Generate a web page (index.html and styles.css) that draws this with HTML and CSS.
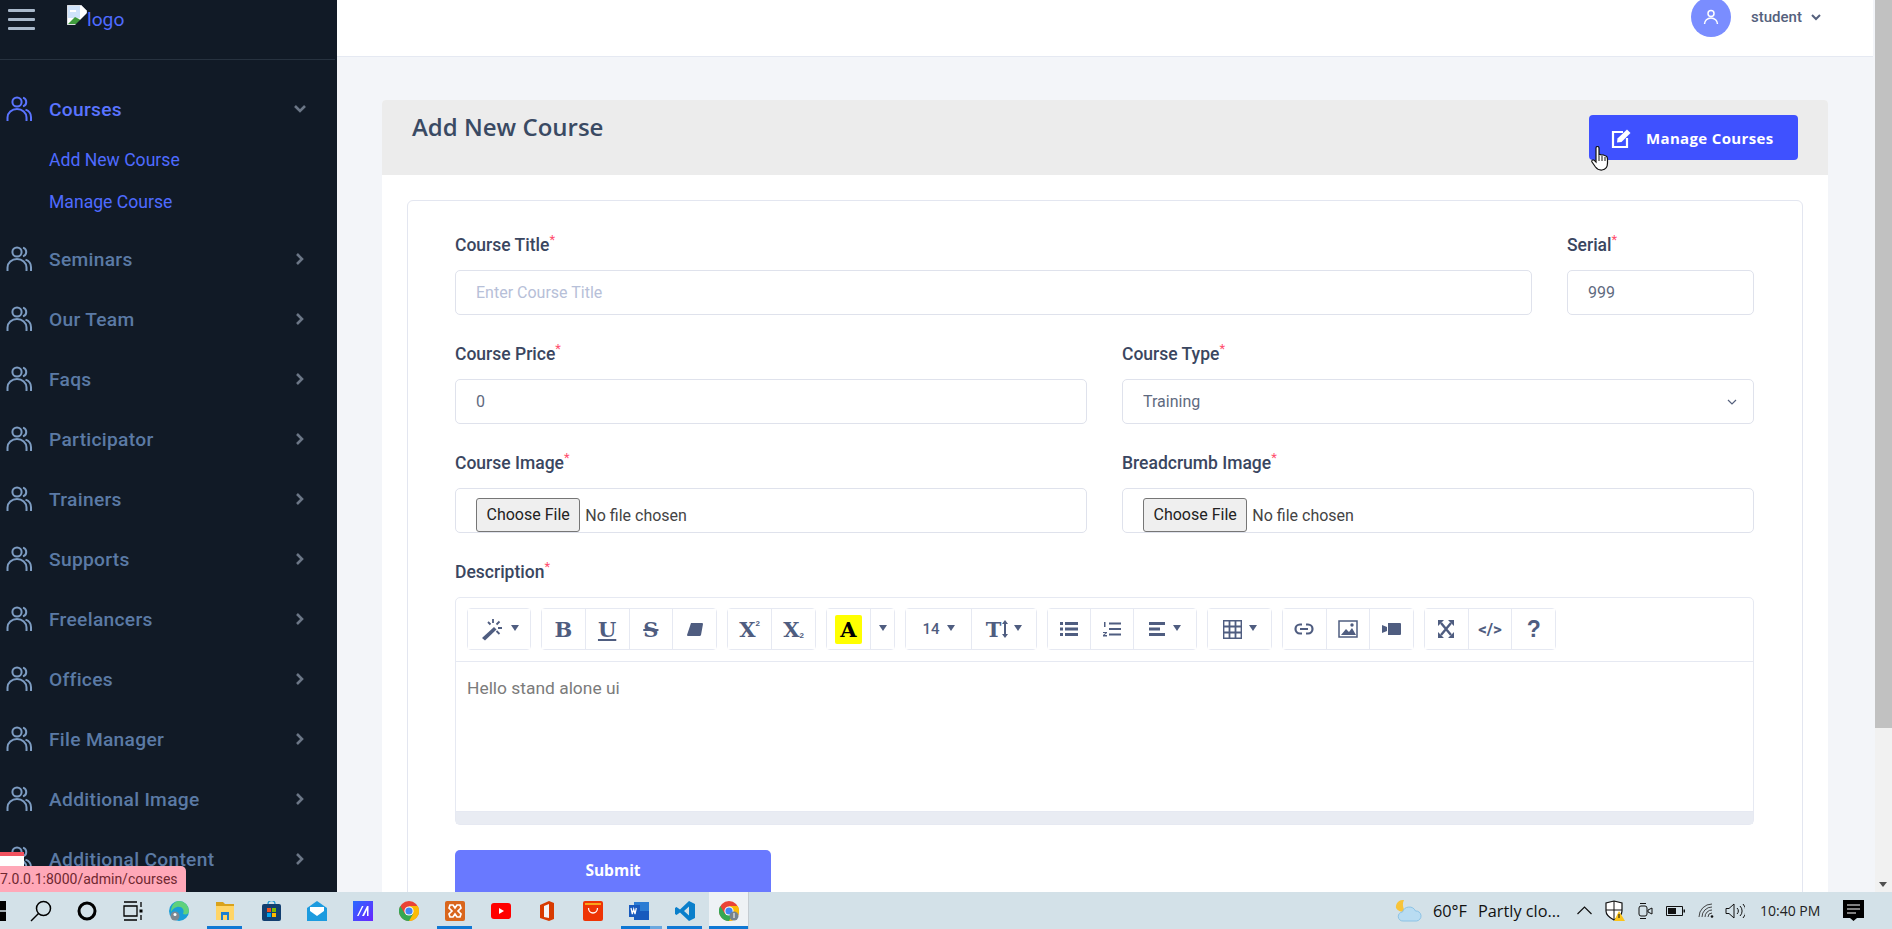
FILE: index.html
```html
<!DOCTYPE html>
<html lang="en">
<head>
<meta charset="utf-8">
<title>Add New Course</title>
<link rel="stylesheet" href="styles.css">
</head>
<body>
<svg class="defs" width="0" height="0">
  <defs>
    <symbol id="users" viewBox="0 0 26 26">
      <circle cx="11" cy="6" r="4.6" fill="none" stroke="currentColor" stroke-width="2"/>
      <path d="M1.5 25v-3.5a9.5 8.5 0 0 1 19 0V25M17 1.6a4.6 4.6 0 0 1 0 8.8M19.5 13.6a8 8 0 0 1 5.5 7.6V25" fill="none" stroke="currentColor" stroke-width="2"/>
    </symbol>
    <symbol id="chev-r" viewBox="0 0 12 14"><path d="M3 2l5 5-5 5" fill="none" stroke="currentColor" stroke-width="2.6"/></symbol>
  </defs>
</svg>
<div class="app">
  <aside class="sidebar">
    <div class="side-head">
      <div class="burger"><span></span><span></span><span></span></div>
      <a class="logo" href="#">
        <svg class="broken" width="20" height="20" viewBox="0 0 20 20"><path d="M0 0h14l6 6v14H0z" fill="#fff" stroke="#b9bec6" stroke-width="1"/><path d="M1 1h12v12H1z" fill="#cfe3fb"/><path d="M1 19l7-7 4 2 6 5z" fill="#3f9b3c"/><path d="M3 5h6v2H3z" fill="#fff"/><path d="M20 8L8 20h12z" fill="#111a26"/></svg>
        <span>logo</span>
      </a>
    </div>
    <nav class="menu">
      <div class="item active"><svg class="ico"><use href="#users"/></svg><span class="name">Courses</span><svg class="chev-d" width="14" height="10" viewBox="0 0 14 10"><path d="M2 2l5 5 5-5" fill="none" stroke="currentColor" stroke-width="2.6"/></svg></div>
      <div class="sub"><a href="#">Add New Course</a><a href="#">Manage Course</a></div>
      <div class="item"><svg class="ico"><use href="#users"/></svg><span class="name">Seminars</span><svg class="chev"><use href="#chev-r"/></svg></div>
      <div class="item"><svg class="ico"><use href="#users"/></svg><span class="name">Our Team</span><svg class="chev"><use href="#chev-r"/></svg></div>
      <div class="item"><svg class="ico"><use href="#users"/></svg><span class="name">Faqs</span><svg class="chev"><use href="#chev-r"/></svg></div>
      <div class="item"><svg class="ico"><use href="#users"/></svg><span class="name">Participator</span><svg class="chev"><use href="#chev-r"/></svg></div>
      <div class="item"><svg class="ico"><use href="#users"/></svg><span class="name">Trainers</span><svg class="chev"><use href="#chev-r"/></svg></div>
      <div class="item"><svg class="ico"><use href="#users"/></svg><span class="name">Supports</span><svg class="chev"><use href="#chev-r"/></svg></div>
      <div class="item"><svg class="ico"><use href="#users"/></svg><span class="name">Freelancers</span><svg class="chev"><use href="#chev-r"/></svg></div>
      <div class="item"><svg class="ico"><use href="#users"/></svg><span class="name">Offices</span><svg class="chev"><use href="#chev-r"/></svg></div>
      <div class="item"><svg class="ico"><use href="#users"/></svg><span class="name">File Manager</span><svg class="chev"><use href="#chev-r"/></svg></div>
      <div class="item"><svg class="ico"><use href="#users"/></svg><span class="name">Additional Image</span><svg class="chev"><use href="#chev-r"/></svg></div>
      <div class="item"><svg class="ico"><use href="#users"/></svg><span class="name">Additional Content</span><svg class="chev"><use href="#chev-r"/></svg></div>
    </nav>
  </aside>

  <main class="main">
    <header class="topbar">
      <div class="avatar"><svg width="16" height="16" viewBox="0 0 16 16"><circle cx="8" cy="4.5" r="3" fill="none" stroke="#fff" stroke-width="1.5"/><path d="M1.5 15a6.5 6 0 0 1 13 0" fill="none" stroke="#fff" stroke-width="1.5"/></svg></div>
      <span class="uname">student</span>
      <svg class="uchev" width="10" height="7" viewBox="0 0 10 7"><path d="M1 1l4 4 4-4" fill="none" stroke="#55617d" stroke-width="2"/></svg>
    </header>
    <div class="content">
      <section class="panel">
        <div class="panel-head">
          <h1>Add New Course</h1>
          <a class="manage" href="#">
            <svg width="21" height="20" viewBox="0 0 21 20"><path d="M12 4H2v15h14V10" fill="none" stroke="#fff" stroke-width="2.2"/><path d="M6.500 10.500L16 1.500l3.500 3.500-9 9-4.500 .5z" fill="#fff"/></svg>
            <span>Manage Courses</span>
          </a>
        </div>
        <div class="panel-body">
          <form class="card">
            <div class="row">
              <div class="field grow"><label>Course Title<sup>*</sup></label><input class="ctl" type="text" placeholder="Enter Course Title"></div>
              <div class="field serial"><label>Serial<sup>*</sup></label><input class="ctl" type="text" value="999"></div>
            </div>
            <div class="row">
              <div class="field half"><label>Course Price<sup>*</sup></label><input class="ctl" type="text" value="0"></div>
              <div class="field half"><label>Course Type<sup>*</sup></label>
                <div class="selwrap"><select class="ctl"><option>Training</option></select><svg class="selchev" width="10" height="6" viewBox="0 0 10 6"><path d="M1 1l4 4 4-4" fill="none" stroke="#55617d" stroke-width="1.2"/></svg></div>
              </div>
            </div>
            <div class="row">
              <div class="field half"><label>Course Image<sup>*</sup></label><div class="filebox"><input type="file"></div></div>
              <div class="field half"><label>Breadcrumb Image<sup>*</sup></label><div class="filebox"><input type="file"></div></div>
            </div>
            <div class="field"><label>Description<sup>*</sup></label>
              <div class="editor">
                <div class="toolbar">
                  <div class="grp g1"><button type="button" class="b"><svg width="24" height="24" viewBox="0 0 24 24"><path d="M2 21L14 10l2.500 2.500L5 23.500z" fill="currentColor"/><path d="M13 2v4M22 11h-4M19.500 4.500l-3 3M8 5l2.500 2.500M19.500 17l-3-3" stroke="currentColor" stroke-width="1.8"/></svg><i class="caret"></i></button></div>
                  <div class="grp g2"><button type="button" class="b serif">B</button><button type="button" class="b serif und">U</button><button type="button" class="b serif strike">S</button><button type="button" class="b"><svg width="17" height="15" viewBox="0 0 17 15"><path d="M5 1h11a1 1 0 0 1 1 1l-2 11a1.500 1.500 0 0 1-1.500 1H2a1 1 0 0 1-1-1z" fill="currentColor"/></svg></button></div>
                  <div class="grp g3"><button type="button" class="b serif">X<small class="sp">2</small></button><button type="button" class="b serif">X<small class="sb">2</small></button></div>
                  <div class="grp g4"><button type="button" class="b b-a"><span class="hl serif">A</span></button><button type="button" class="b b-ac"><i class="caret"></i></button></div>
                  <div class="grp g5"><button type="button" class="b b-num">14<i class="caret"></i></button><button type="button" class="b serif b-t">T<svg width="8" height="20" viewBox="0 0 8 20"><path d="M4 1l3 4H5v10h2l-3 4-3-4h2V5H1z" fill="currentColor"/></svg><i class="caret"></i></button></div>
                  <div class="grp g6">
                    <button type="button" class="b b43"><svg width="18" height="16" viewBox="0 0 18 16"><path d="M0 1h3v3H0zM5 1h13v3H5zM0 6.500h3v3H0zM5 6.500h13v3H5zM0 12h3v3H0zM5 12h13v3H5z" fill="currentColor"/></svg></button>
                    <button type="button" class="b b43"><svg width="18" height="16" viewBox="0 0 18 16"><path d="M6 1.500h12v2H6zM6 7h12v2H6zM6 12.500h12v2H6zM1 1h1.500v5H1zM0 11h4v1L1.500 14H4v1.500H0V14l2.500-2H0z" fill="currentColor"/></svg></button>
                    <button type="button" class="b b62"><svg width="17" height="16" viewBox="0 0 17 16"><path d="M0 1h16v3H0zM0 6.500h11v3H0zM0 12h16v3H0z" fill="currentColor"/></svg><i class="caret"></i></button>
                  </div>
                  <div class="grp g7"><button type="button" class="b"><svg width="19" height="19" viewBox="0 0 19 19"><path d="M.5.500h18v18H.5zM6.500.500v18M12.500.500v18M.5 6.500h18M.5 12.500h18" fill="none" stroke="currentColor" stroke-width="1.8"/></svg><i class="caret"></i></button></div>
                  <div class="grp g8">
                    <button type="button" class="b"><svg width="20" height="12" viewBox="0 0 20 12"><path d="M8 1.500H6a4.500 4.500 0 0 0 0 9h2M12 1.500h2a4.500 4.500 0 0 1 0 9h-2M6 6h8" fill="none" stroke="currentColor" stroke-width="2.2"/></svg></button>
                    <button type="button" class="b"><svg width="20" height="18" viewBox="0 0 20 18"><path d="M1 1h18v16H1z" fill="none" stroke="currentColor" stroke-width="1.5"/><path d="M3 15l5-6 3 3 3-4 4 7z" fill="currentColor"/><circle cx="14" cy="5" r="1.700" fill="currentColor"/></svg></button>
                    <button type="button" class="b"><svg width="19" height="14" viewBox="0 0 19 14"><path d="M6 1h12a1 1 0 0 1 1 1v10a1 1 0 0 1-1 1H6zM0 3l5 2v4l-5 2z" fill="currentColor"/></svg></button>
                  </div>
                  <div class="grp g9">
                    <button type="button" class="b"><svg width="16" height="18" viewBox="0 0 16 18"><path d="M3 3l10 12M13 3L3 15" stroke="currentColor" stroke-width="2.4"/><path d="M0 0h6L0 6zM16 0h-6l6 6zM0 18h6l-6-6zM16 18h-6l6-6z" fill="currentColor"/></svg></button>
                    <button type="button" class="b code">&lt;/&gt;</button>
                    <button type="button" class="b qm">?</button>
                  </div>
                </div>
                <div class="edit-body">Hello stand alone ui</div>
                <div class="edit-status"></div>
              </div>
            </div>
            <button type="button" class="submit">Submit</button>
          </form>
        </div>
      </section>
    </div>
  </main>

  <div class="scrollbar"><div class="thumb"></div><i class="sb-down"></i></div>

  <div class="link-tip">7.0.0.1:8000/admin/courses</div>
  <div class="red-chip"></div>
  <svg class="hand" width="18" height="25" viewBox="0 0 18 25"><path d="M5 2a1.500 1.500 0 0 1 3 0v7l1-.5 1.500.5 1.500-.2 1.500.7 1.500.5c1 .5 1.500 1.500 1.500 3v4c0 4-2 6.500-5.500 7-3 .3-5-1-6.500-3L1 16c-.8-1.500 1-3 2.300-1.700L5 16z" fill="#fff" stroke="#111" stroke-width="1.2"/><path d="M8 10v5M11 10v5M14 11v4" stroke="#111" stroke-width="1"/></svg>
</div>

<footer class="taskbar">
  <div class="tb-left">
    <div class="tk start"><svg width="6" height="20" viewBox="0 0 6 20"><path d="M0 0h6v9.300H0zM0 10.700h6V20H0z" fill="#000"/></svg></div>
    <div class="tk"><svg width="22" height="22" viewBox="0 0 22 22"><circle cx="13.500" cy="8.500" r="7" fill="none" stroke="#000" stroke-width="1.5"/><path d="M8.500 13.500L1 21" stroke="#000" stroke-width="1.5"/></svg></div>
    <div class="tk"><svg width="20" height="20" viewBox="0 0 20 20"><circle cx="10" cy="10" r="8" fill="none" stroke="#000" stroke-width="3"/></svg></div>
    <div class="tk"><svg width="20" height="20" viewBox="0 0 20 20"><path d="M1 1h13M1 19h13M1 5h13v10H1z" fill="none" stroke="#000" stroke-width="1.3"/><path d="M18 1v5M18 14v5" stroke="#000" stroke-width="1.3"/><path d="M16.500 8.500h3v3h-3z" fill="#000"/></svg></div>
    <div class="tk"><svg width="20" height="20" viewBox="0 0 20 20"><circle cx="10" cy="10" r="10" fill="#1a9ed8"/><path d="M10 0a10 10 0 0 1 10 10c0 3-3 4-6 3 2-4-1-8-6-7-3 .5-5 3-6 5C2 5 5 0 10 0z" fill="#5fd17c"/><circle cx="6" cy="15" r="4.500" fill="#7d8891"/><circle cx="6" cy="13.500" r="1.500" fill="#fff"/></svg></div>
    <div class="tk on"><svg width="18" height="20" viewBox="0 0 18 20"><path d="M0 1h7l2 2h9v3H0z" fill="#d9a21b"/><path d="M0 5h18v14H0z" fill="#ffd567"/><path d="M5 11h8v8h-2v-5H7v5H5z" fill="#1b7fd0"/></svg></div>
    <div class="tk"><svg width="19" height="20" viewBox="0 0 19 20"><path d="M6 3a3 3 0 0 1 7 0" fill="none" stroke="#1d9bd7" stroke-width="1.3"/><rect y="3" width="19" height="17" rx="2" fill="#123f70"/><path d="M5 7h4v4H5z" fill="#f25022"/><path d="M10 7h4v4h-4z" fill="#7fba00"/><path d="M5 12h4v4H5z" fill="#00a4ef"/><path d="M10 12h4v4h-4z" fill="#ffb900"/></svg></div>
    <div class="tk"><svg width="20" height="20" viewBox="0 0 20 20"><path d="M0 7l10-7 10 7v13H0z" fill="#1c9bdf"/><path d="M3 6h14v4l-7 5-7-5z" fill="#fff"/></svg></div>
    <div class="tk"><svg width="20" height="20" viewBox="0 0 20 20"><defs><linearGradient id="mg" x1="0" y1="0" x2="1" y2="1"><stop offset="0" stop-color="#2a6bff"/><stop offset="1" stop-color="#6a24ff"/></linearGradient></defs><rect width="20" height="20" fill="url(#mg)"/><path d="M4 15l5-10h1.500l-5 10zM9 15l5-10h1.500v10H14V9l-3 6z" fill="#fff"/></svg></div>
    <div class="tk"><svg width="20" height="20" viewBox="0 0 20 20"><circle cx="10" cy="10" r="10" fill="#ea4335"/><path d="M10 20a10 10 0 0 0 8.700-15H10z" fill="#fbbc05"/><path d="M1.300 5A10 10 0 0 0 10 20l4-7H6z" fill="#34a853"/><circle cx="10" cy="10" r="4.600" fill="#fff"/><circle cx="10" cy="10" r="3.600" fill="#4285f4"/></svg></div>
    <div class="tk on"><svg width="20" height="20" viewBox="0 0 20 20"><rect width="20" height="20" rx="2" fill="#d9661c"/><path d="M5 4h3l2 3 2-3h3l1 3-3 3 3 3-1 3h-3l-2-3-2 3H5l-1-3 3-3-3-3z" fill="none" stroke="#fff" stroke-width="1.7"/></svg></div>
    <div class="tk"><svg width="20" height="16" viewBox="0 0 20 16"><rect width="20" height="16" rx="3" fill="#f00"/><path d="M8 5l5 3-5 3z" fill="#fff"/></svg></div>
    <div class="tk"><svg width="16" height="20" viewBox="0 0 16 20"><path d="M1 4l9-4 5 2v16l-5 2-9-3z" fill="#d83b01"/><path d="M5 5l5-2v14l-5-1z" fill="#f4f6f7"/></svg></div>
    <div class="tk"><svg width="20" height="20" viewBox="0 0 20 20"><rect width="20" height="20" rx="2" fill="#ee3405"/><path d="M2 2h16v2H2z" fill="#f9a51b"/><path d="M5.500 7a4.500 5 0 0 0 9 0" fill="none" stroke="#fff" stroke-width="1.3"/></svg></div>
    <div class="tk on double"><svg width="20" height="20" viewBox="0 0 20 20"><path d="M5 1h15v18H5z" fill="#2b7cd3"/><path d="M5 10h15v9H5z" fill="#185abd"/><rect y="4" width="11" height="12" fill="#185abd"/><path d="M2 7l1.300 6 1.400-5 1.300 5 1.300-6" fill="none" stroke="#fff" stroke-width="1.2"/></svg></div>
    <div class="tk on"><svg width="20" height="20" viewBox="0 0 20 20"><path d="M14 0l6 3v14l-6 3L5 11.500 1.500 14 0 13V7l1.500-1L5 8.500zM14 5.500L9 10l5 4.500z" fill="#0a7fcb"/></svg></div>
    <div class="tk on cur"><svg width="20" height="20" viewBox="0 0 20 20"><circle cx="10" cy="10" r="10" fill="#ea4335"/><path d="M10 20a10 10 0 0 0 8.700-15H10z" fill="#fbbc05"/><path d="M1.300 5A10 10 0 0 0 10 20l4-7H6z" fill="#34a853"/><circle cx="10" cy="10" r="4.600" fill="#fff"/><circle cx="10" cy="10" r="3.600" fill="#4285f4"/><circle cx="15" cy="15" r="4.500" fill="#76838c"/><path d="M15 12v5" stroke="#fff"/></svg></div>
  </div>
  <div class="tb-right">
    <svg class="weather" width="29" height="24" viewBox="0 0 27 24"><path d="M9 1a7 7 0 0 0-8 8 7 7 0 0 0 9 3c-2-3-3-7-1-11z" fill="#f8c43a"/><path d="M8 22a4.500 4.500 0 0 1-.5-9 7 7 0 0 1 13-1 5 5 0 0 1 1 10z" fill="#b9dcf2" stroke="#8cc3e6"/></svg>
    <span class="temp">60°F</span>
    <span class="cond">Partly clo...</span>
    <svg class="s1" width="17" height="9" viewBox="0 0 16 9"><path d="M1 8l7-7 7 7" fill="none" stroke="#111" stroke-width="1.2"/></svg>
    <svg class="s2" width="20" height="21" viewBox="0 0 20 21"><path d="M9 1l8 2v8c0 4-4 7-8 9-4-2-8-5-8-9V3z" fill="#fff" stroke="#111" stroke-width="1.2"/><path d="M9 1v19M1 10h16" stroke="#111"/><path d="M14 11l6 10h-11z" fill="#fcc419"/><path d="M14 14v4" stroke="#111"/></svg>
    <svg class="s3" width="15" height="18" viewBox="0 0 15 18"><rect x="1" y="4" width="8" height="10" rx="2" fill="none" stroke="#111"/><path d="M10 8l4-2v6l-4-2zM2 1.500h6M2 16.500h6" fill="none" stroke="#111"/></svg>
    <svg class="s4" width="19" height="10" viewBox="0 0 19 10"><path d="M.5.500h16v9H.5z" fill="none" stroke="#111"/><path d="M2 2h8v6H2zM17.500 3.500H19v3h-1.500z" fill="#111"/></svg>
    <svg class="s5" width="17" height="15" viewBox="0 0 17 15"><path d="M1 14a13 13 0 0 1 13-13M4 14a10 10 0 0 1 10-10M7 14a7 7 0 0 1 7-7M10 14a4 4 0 0 1 4-4" fill="none" stroke="#333" stroke-width=".9"/><circle cx="14" cy="13.500" r="1.300" fill="#111"/></svg>
    <svg class="s6" width="20" height="16" viewBox="0 0 20 16"><path d="M1 5.500h3L9 1v14l-5-4.500H1z" fill="none" stroke="#111"/><path d="M12 5a4 4 0 0 1 0 6M15 3a7 7 0 0 1 0 10M18 1a10 10 0 0 1 0 14" fill="none" stroke="#111"/></svg>
    <span class="clock">10:40 PM</span>
    <svg class="notif" width="21" height="21" viewBox="0 0 21 21"><path d="M0 0h21v18h-7l-3.500 3-3.500-3H0z" fill="#000"/><path d="M4 5h13M4 9h13M4 13h9" stroke="#fff" stroke-width="1.2"/></svg>
  </div>
</footer>
</body>
</html>
```
FILE: styles.css
```css
* { box-sizing: border-box; }
html, body { margin: 0; height: 100%; overflow: hidden; }
body { display: flex; flex-direction: column; font-family: Roboto, "Liberation Sans", sans-serif; background: #f3f5f9; }
.defs { position: absolute; }
.app { height: 892px; display: flex; overflow: hidden; position: relative; flex: none; }

/* sidebar */
.sidebar { width: 337px; flex: none; background: #111a26; }
.side-head { height: 60px; border-bottom: 1px solid #27323f; margin-right: 2px; display: flex; align-items: flex-start; }
.burger { margin: 9px 0 0 8px; width: 27px; display: flex; flex-direction: column; gap: 6px; }
.burger span { height: 3px; background: #a9b9cb; border-radius: 1px; }
.logo { display: flex; margin: 5px 0 0 32px; color: #4f6bff; text-decoration: none; font-size: 19.2px; height: 26px; }
.logo span { margin-top: 3px; line-height: 23px; }
.menu { padding-top: 19px; }
.item { height: 60px; display: flex; align-items: center; color: #5b7aa5; position: relative; }
.ico { width: 26px; height: 26px; margin-left: 6px; color: #7d9cc2; flex: none; }
.name { margin-left: 17px; font-size: 19.2px; font-weight: 500; flex: 1; letter-spacing: .3px; }
.chev { width: 12px; height: 14px; margin-right: 31px; color: #6b7686; flex: none; }
.chev-d { margin-right: 30px; color: #6b7686; flex: none; }
.item.active, .item.active .name { color: #5a74ff; }
.item.active .ico { color: #5a74ff; }
.item.active .chev-d { color: #6b7686; }
.sub { padding: 0 0 6px 49px; display: flex; flex-direction: column; }
.sub a { height: 42px; line-height: 42px; font-size: 17.6px; color: #4f6bff; text-decoration: none; }

/* main */
.main { flex: 1; min-width: 0; display: flex; flex-direction: column; overflow: hidden; }
.topbar { height: 57px; flex: none; background: #fff; border-bottom: 1px solid #e5e9f2; margin-right: 2px; display: flex; align-items: flex-start; padding-left: 1354px; }
.avatar { width: 40px; height: 40px; border-radius: 50%; background: #7a8dff; margin-top: -3px; display: flex; align-items: center; justify-content: center; }
.uname { margin: 7px 0 0 20px; font-size: 15px; font-weight: 500; color: #55617d; line-height: 20px; }
.uchev { margin: 14px 0 0 9px; }
.content { padding: 43px 47px 0 45px; flex: 1; }
.panel { background: #fff; border-radius: 4px 4px 0 0; }
.panel-head { height: 75px; background: #ececec; border-radius: 4px 4px 0 0; display: flex; justify-content: space-between; padding: 14px 30px 0; }
.panel-head h1 { margin: 0; font: 600 24px/25px "Open Sans", sans-serif; color: #3a4a63; }
.manage { width: 209px; height: 45px; margin-top: 1px; background: #3f51ff; border-radius: 4px; color: #fff; text-decoration: none; display: flex; align-items: center; padding-left: 22px; gap: 14px; font: 700 15px "Open Sans", sans-serif; letter-spacing: .35px; }
.panel-body { padding: 25px 25px 0; }
.card { border: 1px solid #e3e6f0; border-radius: 6px; padding: 32px 48px 0 47px; }
.row { display: flex; gap: 35px; margin-bottom: 27px; }
.field { display: flex; flex-direction: column; }
.grow { flex: 1; }
.half { flex: 1; min-width: 0; }
.serial { width: 187px; }
label { height: 25px; line-height: 25px; margin-bottom: 12px; font-size: 17.5px; font-weight: 500; color: #3a4660; }
label sup { color: #ff4d6d; font-size: 13px; line-height: 0; font-weight: 400; }
.ctl { width: 100%; height: 45px; border: 1px solid #dfe2ec; border-radius: 5px; background: #fff; padding: 0 20px; font: 400 16px Roboto, sans-serif; color: #5f6a80; outline: none; appearance: none; }
.ctl::placeholder { color: #b7c0d8; }
.selwrap { position: relative; }
.selchev { position: absolute; right: 17px; top: 20px; }
.filebox { height: 45px; border: 1px solid #dfe2ec; border-radius: 5px; padding: 8px 20px 0; display: flex; align-items: center; }
.filebox input { font: 400 16px Roboto, sans-serif; color: #444; width: 100%; }
.filebox input::file-selector-button { height: 34px; padding: 0 9.5px; margin-right: 5px; font: 400 16px Roboto, sans-serif; border: 1px solid #767676; border-radius: 3px; background: #efefef; color: #222; }

/* editor */
.editor { border: 1px solid #e6e9f2; border-radius: 5px; height: 228px; display: flex; flex-direction: column; }
.toolbar { height: 64px; flex: none; border-bottom: 1px solid #e6e9f2; display: flex; gap: 10px; padding: 10px 0 0 11px; }
.grp { display: flex; height: 42px; border: 1px solid #e6e9f2; border-radius: 4px; }
.g1 { width: 64px; } .g2 { width: 176px; } .g3 { width: 89px; } .g4 { width: 69px; }
.g5 { width: 132px; } .g6 { width: 150px; } .g7 { width: 65px; } .g8 { width: 132px; } .g9 { width: 132px; }
.b { flex: 1; min-width: 0; height: 100%; padding: 0; border: 0; border-right: 1px solid #e6e9f2; background: #fff; color: #4f5d80; display: flex; align-items: center; justify-content: center; gap: 7px; font: 500 15px Roboto, sans-serif; }
.b:last-child { border-right: 0; }
.b-a { flex: 0 0 44px; } .b-ac { flex: 0 0 23px; }
.b-num { flex: 0 0 66px; } .b-t { flex: 0 0 64px; }
.b43 { flex: 0 0 43px; } .b62 { flex: 0 0 62px; }
.caret { width: 0; height: 0; border-left: 4.5px solid transparent; border-right: 4.5px solid transparent; border-top: 6px solid currentColor; margin-top: -3px; }
.serif { font: 700 21px "DejaVu Serif", "Liberation Serif", serif; gap: 0; }
.serif .caret { margin-left: 5px; }
.und { text-decoration: underline; }
.strike { text-decoration: line-through; }
.serif small { font: 700 8px "Liberation Sans", sans-serif; align-self: center; }
.sp { margin-top: -12px; }
.sb { margin-top: 13px; }
.hl { width: 27px; height: 29px; background: #ff0; color: #000; border-radius: 2px; display: flex; align-items: center; justify-content: center; }
.code { font: 700 17px Roboto, sans-serif; }
.qm { font: 900 23px "Liberation Sans", sans-serif; }
.edit-body { flex: 1; padding: 14px 10px 0 11px; font-size: 17.4px; line-height: 24px; color: #7b7b7b; }
.edit-status { height: 13px; background: #e9ecf3; flex: none; border-top: 1px solid #e6e9f2; }
.submit { display: block; margin-top: 25px; width: 316px; height: 60px; border: 0; border-radius: 5px; background: #6979ff; color: #fff; padding: 0 0 21px; font: 700 15.5px "Open Sans", sans-serif; }

/* scrollbar */
.scrollbar { width: 17px; flex: none; background: #f1f1f1; position: relative; }
.thumb { height: 728px; background: #c1c1c1; }
.sb-down { position: absolute; left: 4px; bottom: 5px; width: 0; height: 0; border-left: 4.5px solid transparent; border-right: 4.5px solid transparent; border-top: 5px solid #505050; }

/* overlays */
.link-tip { position: absolute; left: 0; bottom: 0; width: 186px; height: 26px; background: #ffa8b8; border-top-right-radius: 5px; color: #6f2730; font-size: 14px; line-height: 26px; white-space: nowrap; }
.red-chip { position: absolute; left: 0; bottom: 26px; width: 24px; height: 14px; background: #fff; border-top: 4px solid #f2525f; }
.hand { position: absolute; left: 1591px; top: 146px; }

/* taskbar */
.taskbar { height: 37px; flex: none; background: #d3e1e8; display: flex; justify-content: space-between; align-items: stretch; }
.tb-left { display: flex; }
.tk { width: 46px; display: flex; align-items: center; justify-content: center; position: relative; }
.tk.start { width: 18px; justify-content: flex-start; }
.tk.on::after { content: ""; position: absolute; left: 5px; right: 6px; bottom: 0; height: 3px; background: #0f78d4; }
.tk.double::before { content: ""; position: absolute; left: 34px; right: 0; bottom: 0; height: 3px; background: #6aa8df; z-index: 1; }
.tk.cur { background: #eef2f5; margin-left: 1px; width: 40px; border-right: 1px solid #c4ccd2; }
.tk.cur::after { left: 0; right: 0; }
.tb-right { display: flex; align-items: center; padding-right: 28px; }
.weather { margin-right: 10px; }
.temp, .cond { font: 400 16.3px "Open Sans", sans-serif; color: #111; white-space: nowrap; }
.temp { width: 45px; }
.cond { width: 98px; }
.s1 { margin-right: 12px; }
.s2 { margin-right: 13px; }
.s3 { margin-right: 13px; }
.s4 { margin-right: 13px; }
.s5 { margin-right: 10px; }
.s6 { margin-right: 15px; }
.clock { font: 400 14px "Open Sans", sans-serif; color: #222; width: 83px; white-space: nowrap; }
```
